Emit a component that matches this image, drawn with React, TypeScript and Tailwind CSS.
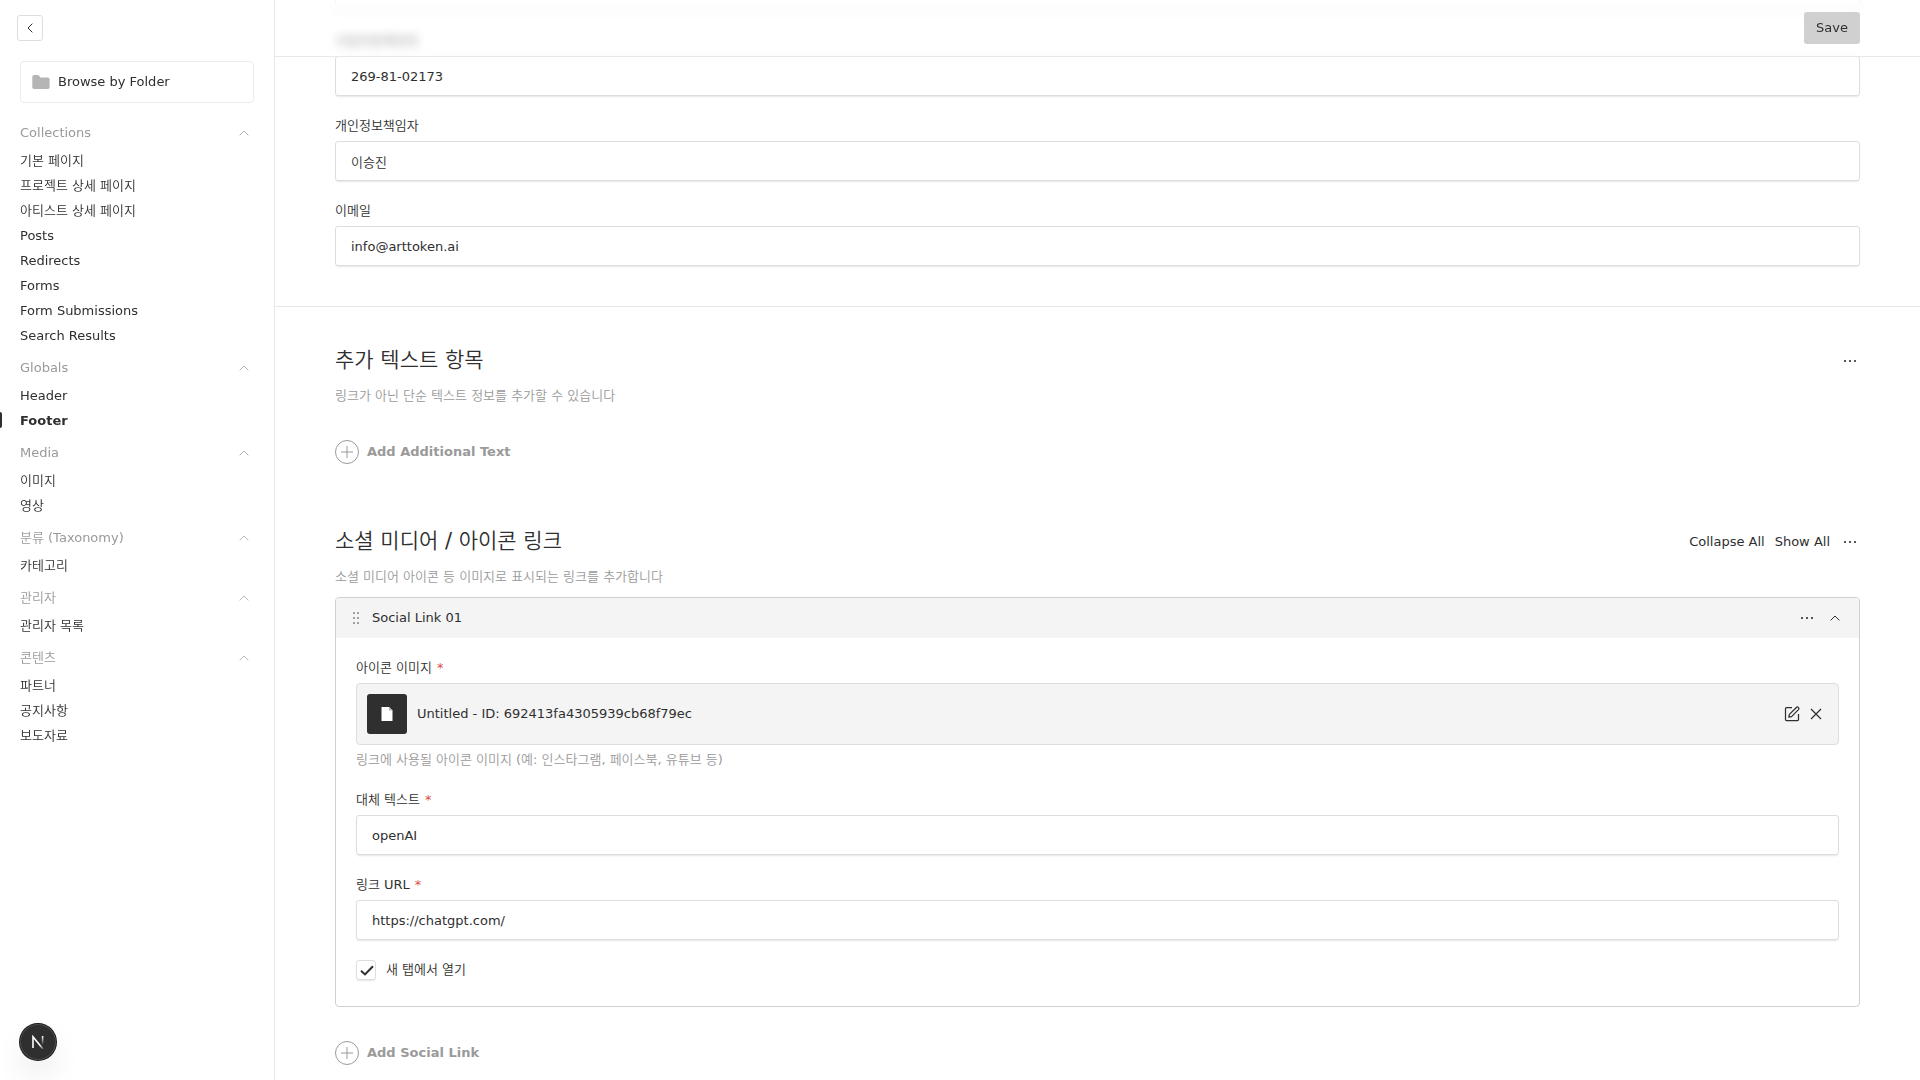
import React, { useId } from 'react';

type NavGroup = { title: string; items: string[] };

const groups: NavGroup[] = [
  {
    title: 'Collections',
    items: ['기본 페이지', '프로젝트 상세 페이지', '아티스트 상세 페이지', 'Posts', 'Redirects', 'Forms', 'Form Submissions', 'Search Results'],
  },
  { title: 'Globals', items: ['Header', 'Footer'] },
  { title: 'Media', items: ['이미지', '영상'] },
  { title: '분류 (Taxonomy)', items: ['카테고리'] },
  { title: '관리자', items: ['관리자 목록'] },
  { title: '콘텐츠', items: ['파트너', '공지사항', '보도자료'] },
];

const ACTIVE = 'Footer';

function Chevron({ className }: { className: string }) {
  return (
    <svg className={className} viewBox="0 0 20 20" fill="none" stroke="currentColor" strokeLinecap="square" aria-hidden="true">
      <path d="M6 12 L10 8 L14 12" />
    </svg>
  );
}

function Dots() {
  return (
    <svg className="size-5" viewBox="0 0 20 20" fill="currentColor" aria-hidden="true">
      <circle cx="5" cy="10" r="1.1" />
      <circle cx="10" cy="10" r="1.1" />
      <circle cx="15" cy="10" r="1.1" />
    </svg>
  );
}

const inputClass =
  'h-10 w-full rounded-[3px] border border-[#dddddd] bg-white px-[15px] shadow-[0_2px_2px_-1px_rgba(0,0,0,0.1)] outline-none';

function Field({ label, value, required }: { label: string; value: string; required?: boolean }) {
  const id = useId();
  return (
    <div className="flex flex-col gap-[5px]">
      <label htmlFor={id} className="block leading-5">
        {label}
        {required && <span className="ml-[5px] text-[#da4b48]">*</span>}
      </label>
      <input id={id} type="text" defaultValue={value} className={inputClass} />
    </div>
  );
}

function AddButton({ children }: { children: string }) {
  return (
    <button type="button" className="flex h-6 items-center gap-2 font-bold text-[#9a9a9a]">
      <svg className="size-6" viewBox="0 0 24 24" fill="none" stroke="currentColor" aria-hidden="true">
        <circle cx="12" cy="12" r="11.5" />
        <path d="M12 6v12M6 12h12" />
      </svg>
      {children}
    </button>
  );
}

function Sidebar() {
  return (
    <aside className="w-[275px] shrink-0 border-r border-[#e8e8e8] will-change-transform">
      <div className="px-[17px] pt-[15px]">
        <button type="button" aria-label="Close menu" className="flex size-[26px] items-center justify-center rounded-[3px] border border-[#dddddd]">
          <svg className="size-5" viewBox="0 0 20 20" fill="none" stroke="currentColor" strokeLinecap="square" aria-hidden="true">
            <path d="M12 6 L8 10 L12 14" />
          </svg>
        </button>
      </div>
      <nav className="px-5 pt-5">
        <a href="#folders" className="mb-[18px] flex h-[42px] items-center gap-2 rounded-[4px] border border-[#ebebeb] pl-[11px]">
          <svg className="h-5 w-[18px] text-[#b5b5b5]" viewBox="0 0 18 20" fill="currentColor" aria-hidden="true">
            <path d="M0.3 4.8 Q0.3 3 2 3 H5.6 Q6.6 3 7.2 3.8 L7.8 4.8 Q8.2 5.4 9 5.4 H15.8 Q17.6 5.4 17.6 7.2 V15.2 Q17.6 17 15.8 17 H2.1 Q0.3 17 0.3 15.2 Z" />
          </svg>
          Browse by Folder
        </a>
        {groups.map((group) => (
          <section key={group.title} className="mb-2">
            <button type="button" className="mb-[3px] flex h-6 w-full items-center justify-between text-[#9a9a9a]">
              {group.title}
              <Chevron className="size-5 text-[#b5b5b5]" />
            </button>
            <ul>
              {group.items.map((item) => (
                <li key={item} className="relative">
                  {item === ACTIVE && <span className="absolute top-1 -left-5 h-4 w-[2px] rounded-r-[2px] bg-[#2f2f2f]" />}
                  <a href={'#' + item} className={item === ACTIVE ? 'block leading-[25px] font-bold' : 'block leading-[25px]'}>
                    {item}
                  </a>
                </li>
              ))}
            </ul>
          </section>
        ))}
      </nav>
    </aside>
  );
}

function SocialCard() {
  return (
    <article className="rounded-[4px] border border-[#d0d0d0]">
      <header className="flex h-10 items-center rounded-t-[3px] bg-[#f4f4f4] pr-[14px] pl-[10px]">
        <svg className="size-5 text-[#9a9a9a]" viewBox="0 0 20 20" fill="currentColor" aria-hidden="true">
          {[5, 10, 15].map((y) => (
            <React.Fragment key={y}>
              <rect x="7" y={y - 1} width="2" height="2" rx="0.5" />
              <rect x="11" y={y - 1} width="2" height="2" rx="0.5" />
            </React.Fragment>
          ))}
        </svg>
        <h3 className="ml-[6px] flex-1">Social Link 01</h3>
        <div className="flex items-center gap-2">
          <button type="button" aria-label="Row actions"><Dots /></button>
          <button type="button" aria-label="Toggle row"><Chevron className="size-5" /></button>
        </div>
      </header>
      <div className="flex flex-col gap-5 px-5 pt-5 pb-[26px]">
        <div>
          <p className="mb-[5px] leading-5">
            아이콘 이미지<span className="ml-[5px] text-[#da4b48]">*</span>
          </p>
          <div className="flex h-[62px] items-center rounded-[4px] border border-[#dddddd] bg-[#f4f4f4] pr-3 pl-[10px]">
            <div className="flex size-10 items-center justify-center rounded-[3px] bg-[#2f2f2f]">
              <svg className="size-5" viewBox="0 0 20 20" aria-hidden="true">
                <path d="M4.5 3 H12 L15.5 6.5 V17 H4.5 Z" fill="#fff" />
                <path d="M12 3 L15.5 6.5 H12 Z" fill="#b5b5b5" />
              </svg>
            </div>
            <span className="ml-[10px] flex-1">Untitled - ID: 692413fa4305939cb68f79ec</span>
            <div className="flex items-center gap-1">
              <button type="button" aria-label="Edit">
                <svg className="size-5" viewBox="0 0 20 20" fill="none" stroke="currentColor" strokeWidth="1.25" strokeLinejoin="round" aria-hidden="true">
                  <path d="M10 3.5 H4.5 Q3.5 3.5 3.5 4.5 V15.5 Q3.5 16.5 4.5 16.5 H15.5 Q16.5 16.5 16.5 15.5 V10" />
                  <path d="M14.6 3.2 Q15.4 2.6 16.4 3.5 Q17.4 4.5 16.7 5.4 L9.6 12.6 L6.8 13.2 L7.4 10.4 Z" />
                </svg>
              </button>
              <button type="button" aria-label="Remove">
                <svg className="size-5" viewBox="0 0 20 20" fill="none" stroke="currentColor" strokeWidth="1.25" aria-hidden="true">
                  <path d="M5 5 L15 15 M15 5 L5 15" />
                </svg>
              </button>
            </div>
          </div>
          <p className="mt-[5px] leading-5 text-[#9a9a9a]">링크에 사용될 아이콘 이미지 (예: 인스타그램, 페이스북, 유튜브 등)</p>
        </div>
        <Field label="대체 텍스트" value="openAI" required />
        <Field label="링크 URL" value="https://chatgpt.com/" required />
        <label className="flex items-center gap-[10px] self-start leading-5">
          <span className="relative size-5">
            <input
              type="checkbox"
              defaultChecked
              className="peer block size-5 appearance-none rounded-[3px] border border-[#dddddd] bg-white shadow-[0_2px_2px_-1px_rgba(0,0,0,0.1)]"
            />
            <svg className="pointer-events-none absolute inset-0 hidden size-5 peer-checked:block" viewBox="0 0 20 20" fill="none" stroke="currentColor" strokeWidth="2" aria-hidden="true">
              <path d="M5 10.8 L9 14.4 L17 6.2" />
            </svg>
          </span>
          새 탭에서 열기
        </label>
      </div>
    </article>
  );
}

export default function App() {
  return (
    <div className="flex min-h-screen bg-white font-['DejaVu_Sans','Noto_Sans_CJK_KR_DemiLight','Noto_Sans_CJK_KR',sans-serif] text-[13px] leading-5 text-[#2f2f2f]">
      <Sidebar />
      <main className="min-w-0 flex-1">
        <header className="sticky top-0 z-10 flex h-[57px] items-center justify-end border-b border-[#e8e8e8] bg-white/50 px-[60px] backdrop-blur-[5px]">
          <button type="button" className="h-8 rounded-[3px] bg-[#d0d0d0] px-3">Save</button>
        </header>
        <div className="-mt-[86px] flex flex-col gap-5 border-b border-[#e8e8e8] px-[60px] pb-10">
          <input type="text" aria-label="대표자" className={inputClass} />
          <Field label="사업자등록번호" value="269-81-02173" />
          <Field label="개인정보책임자" value="이승진" />
          <Field label="이메일" value="info@arttoken.ai" />
        </div>
        <div className="px-[60px] pt-10 pb-[15px]">
          <section>
            <div className="flex h-7 items-center justify-between">
              <h2 className="self-start text-[21px] leading-[26px]">추가 텍스트 항목</h2>
              <button type="button" aria-label="Field actions"><Dots /></button>
            </div>
            <p className="mt-[11px] leading-5 text-[#9a9a9a]">링크가 아닌 단순 텍스트 정보를 추가할 수 있습니다</p>
            <div className="mt-[34px]">
              <AddButton>Add Additional Text</AddButton>
            </div>
          </section>
          <section className="mt-16">
            <div className="flex h-7 items-center justify-between">
              <h2 className="self-start text-[21px] leading-[26px]">소셜 미디어 / 아이콘 링크</h2>
              <div className="flex items-center gap-[10px]">
                <button type="button">Collapse All</button>
                <button type="button">Show All</button>
                <button type="button" aria-label="Field actions"><Dots /></button>
              </div>
            </div>
            <p className="mt-[11px] mb-[10px] leading-5 text-[#9a9a9a]">소셜 미디어 아이콘 등 이미지로 표시되는 링크를 추가합니다</p>
            <SocialCard />
            <div className="mt-[34px]">
              <AddButton>Add Social Link</AddButton>
            </div>
          </section>
        </div>
      </main>
      <button
        type="button"
        aria-label="Open developer tools"
        className="fixed bottom-5 left-5 flex size-9 items-center justify-center rounded-full bg-[#2f2f2f] shadow-[0_0_0_1px_#171717,inset_0_0_0_1px_#4a4a4a,0_16px_32px_-8px_rgba(0,0,0,0.24)]"
      >
        <svg className="h-[14px] w-[14px]" viewBox="0 0 14 14" fill="none" strokeWidth="1.6" aria-hidden="true">
          <defs>
            <linearGradient id="bar" x1="0" y1="1" x2="0" y2="10" gradientUnits="userSpaceOnUse">
              <stop stopColor="#fff" />
              <stop offset="1" stopColor="#fff" stopOpacity="0" />
            </linearGradient>
            <linearGradient id="diagonal" x1="9" y1="10" x2="13" y2="15" gradientUnits="userSpaceOnUse">
              <stop stopColor="#fff" />
              <stop offset="1" stopColor="#fff" stopOpacity="0" />
            </linearGradient>
          </defs>
          <path d="M2 13 V1.8 L12 14" stroke="url(#diagonal)" />
          <rect x="10.8" y="1" width="1.6" height="10" fill="url(#bar)" />
        </svg>
      </button>
    </div>
  );
}
